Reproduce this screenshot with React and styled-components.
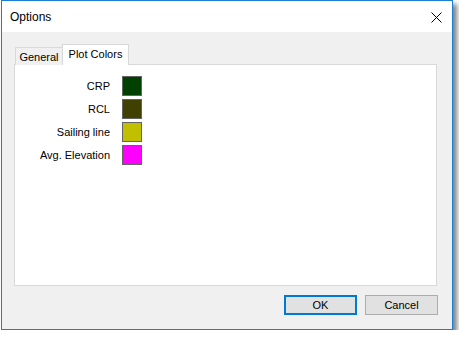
import React from "react";
import styled, { createGlobalStyle } from "styled-components";

const Global = createGlobalStyle`
  html, body {
    margin: 0;
    padding: 0;
    background: #ffffff;
  }
  body {
    font-family: "Liberation Sans", Arial, sans-serif;
    font-size: 11px;
    color: #000;
  }
`;

const Window = styled.div`
  margin-left: 1px;
  width: 452px;
  height: 330px;
  box-sizing: border-box;
  border: 1px solid #1a7fd4;
  background: #f0f0f0;
  box-shadow: 4px 4px 5px rgba(0, 0, 0, 0.5);
  display: flex;
  flex-direction: column;
`;

const TitleBar = styled.div`
  height: 31px;
  background: #ffffff;
  display: flex;
  align-items: center;
  justify-content: space-between;
  padding: 0 10px 0 8px;
`;

const Title = styled.span`
  font-size: 12px;
  line-height: 14px;
  margin-top: 1px;
`;

const CloseIcon = styled.svg`
  width: 11px;
  height: 11px;
  display: block;
  margin-top: 1px;
`;

const Body = styled.div`
  flex: 1;
  display: flex;
  flex-direction: column;
  padding: 12px 15px 0 12px;
`;

const TabStrip = styled.div`
  display: flex;
  align-items: flex-end;
  height: 21px;
  padding-left: 1px;
  position: relative;
  z-index: 1;
  margin-bottom: -1px;
`;

const Tab = styled.div`
  box-sizing: border-box;
  border: 1px solid #d9d9d9;
  border-bottom: none;
  display: flex;
  align-items: center;
  justify-content: center;
  width: ${(p) => (p.$active ? "67px" : "48px")};
  height: ${(p) => (p.$active ? "21px" : "18px")};
  margin-left: ${(p) => (p.$active ? "-1px" : "0")};
  background: ${(p) => (p.$active ? "#ffffff" : "#f0f0f0")};
  padding-bottom: ${(p) => (p.$active ? "2px" : "0")};
`;

const Panel = styled.div`
  box-sizing: border-box;
  width: 423px;
  height: 222px;
  border: 1px solid #d9d9d9;
  background: #ffffff;
  padding-top: 11px;
  display: flex;
  flex-direction: column;
  gap: 3px;
`;

const Row = styled.div`
  display: flex;
  align-items: center;
  height: 20px;
`;

const Label = styled.span`
  width: 95px;
  text-align: right;
  margin-right: 12px;
  white-space: nowrap;
`;

const Swatch = styled.div`
  box-sizing: border-box;
  width: 20px;
  height: 20px;
  border: 1px solid #646464;
  background: ${(p) => p.$color};
`;

const Buttons = styled.div`
  display: flex;
  justify-content: flex-end;
  gap: 8px;
  margin-top: 9px;
  margin-right: -1px;
`;

const Button = styled.button`
  box-sizing: border-box;
  width: 73px;
  height: 20px;
  padding: 0;
  font-family: "Liberation Sans", Arial, sans-serif;
  font-size: 11px;
  color: #000;
  background: #e1e1e1;
  border: ${(p) => (p.$default ? "2px solid #0078d7" : "1px solid #adadad")};
`;

const colors = [
  { name: "CRP", color: "#004000" },
  { name: "RCL", color: "#404000" },
  { name: "Sailing line", color: "#c0c000" },
  { name: "Avg. Elevation", color: "#ff00ff" },
];

export default function App() {
  return (
    <>
      <Global />
      <Window>
        <TitleBar>
          <Title>Options</Title>
          <CloseIcon viewBox="0 0 11 11">
            <path d="M0.5 0.5 L10.5 10.5 M10.5 0.5 L0.5 10.5" stroke="#000" strokeWidth="1" />
          </CloseIcon>
        </TitleBar>
        <Body>
          <TabStrip>
            <Tab>General</Tab>
            <Tab $active>Plot Colors</Tab>
          </TabStrip>
          <Panel>
            {colors.map((c) => (
              <Row key={c.name}>
                <Label>{c.name}</Label>
                <Swatch $color={c.color} />
              </Row>
            ))}
          </Panel>
          <Buttons>
            <Button $default>OK</Button>
            <Button>Cancel</Button>
          </Buttons>
        </Body>
      </Window>
    </>
  );
}
